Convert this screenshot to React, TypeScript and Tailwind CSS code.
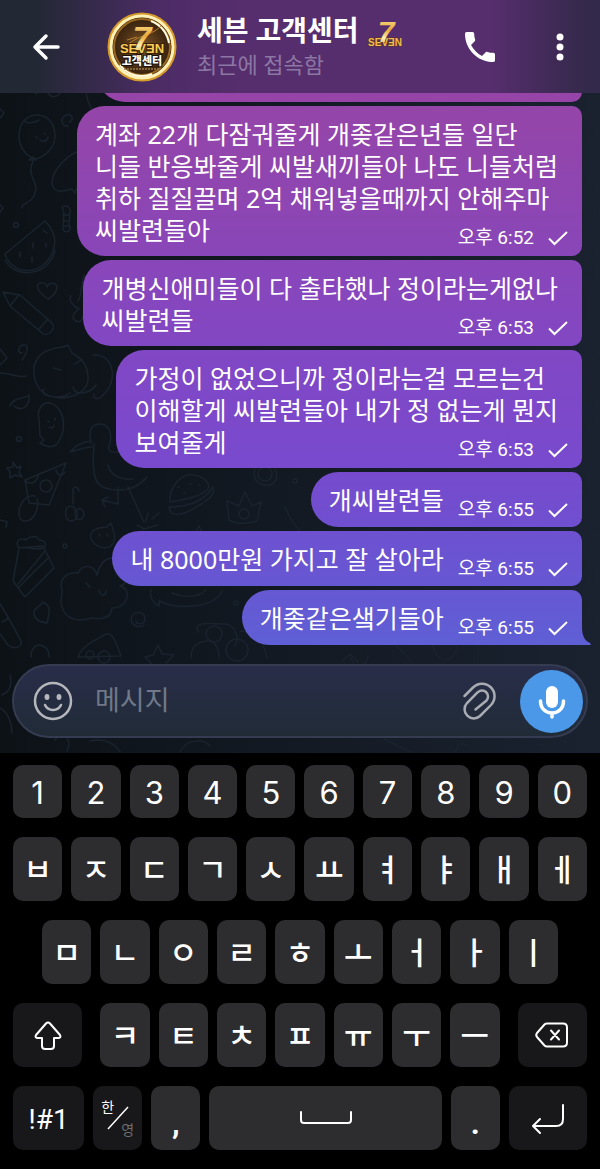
import type { ReactNode } from 'react'

interface Mensaje {
  lines: string[]
  time: string
  tone: string
}

const messages: Mensaje[] = [
  {
    lines: [
      '계좌 22개 다잠궈줄게 개좆같은년들 일단',
      '니들 반응봐줄게 씨발새끼들아 나도 니들처럼',
      '취하 질질끌며 2억 채워넣을때까지 안해주마',
      '씨발련들아',
    ],
    time: '오후 6:52',
    tone: 'from-[#9545a8] to-[#8946b8]',
  },
  {
    lines: ['개병신애미들이 다 출타했나 정이라는게없나', '씨발련들'],
    time: '오후 6:53',
    tone: 'from-[#8946b9] to-[#8247c3]',
  },
  {
    lines: ['가정이 없었으니까 정이라는걸 모르는건', '이해할게 씨발련들아 내가 정 없는게 뭔지', '보여줄게'],
    time: '오후 6:53',
    tone: 'from-[#8147c4] to-[#784ace]',
  },
  { lines: ['개씨발련들'], time: '오후 6:55', tone: 'from-[#774acd] to-[#6f50d0]' },
  { lines: ['내 8000만원 가지고 잘 살아라'], time: '오후 6:55', tone: 'from-[#6e51d0] to-[#6657d2]' },
  { lines: ['개좆같은샠기들아'], time: '오후 6:55', tone: 'from-[#6658d2] to-[#5f5fd5]' },
]

function Doodles() {
  return (
    <svg
      className="absolute inset-0 h-full w-full"
      viewBox="0 0 600 753"
      preserveAspectRatio="xMidYMin slice"
      fill="none"
      stroke="#1a232d"
      strokeWidth="1.5"
      strokeLinecap="round"
      strokeLinejoin="round"
      aria-hidden="true"
    >
      {/* balloon */}
      <path d="M37 115c-12 0-18 10-18 21s7 20 16 23c10-2 20-11 20-23s-7-21-18-21zM29 160l7 0-3-3zM33 161c-8 16 8 20 1 35-4 8-14 8-12 12M24 121c5 4 10 2 15-1M36 137l1 1M44 133l1 1M40 140c3 3 8 0 8-3" />
      <path d="M68 126c-7 1-8-8-2-11s9 6 3 7M36 94c4-5 9-6 12-1s9 5 13-1M86 93c2 12 7 20 14 24" />
      {/* whale */}
      <path d="M79 151c-18 7-30 26-26 36 4 8 16 2 19 2l3 4 3-8M0 109l4 4-4 5M0 205l3 3-3 4" />
      {/* watermelon */}
      <path d="M45 221L5 254c7 23 42 23 49-7 3-10-3-20-9-26zM5 260c10 20 45 16 50-10M33 243v5M46 243v4M20 252v5M32 257v5M43 230l4 3" />
      <path d="M62 207c5-3 8 0 8 4l-1 14c3 5-2 9-6 5l1-17-2-6zM63 215h6M63 221h6M63 226h6" />
      <circle cx="16" cy="225" r="2.5" />
      {/* pencil and heart */}
      <path d="M3 292l7 14 32 27c6 5 15-5 10-10L20 295zM10 306l8-10M38 330l10-11M48 299c-9-6-14-14-8-16 4-2 7 2 7 4 2-5 9-5 10 0 0 5-4 9-9 12zM84 275c-3 10-2 20-6 26M71 296c-4 6 6 12 8 13-6 4-8 9-3 12s8-4 8-10" />
      <path d="M22 353c-5 0-4-8 2-8s3 8-2 15M0 349l7 9-7 7" />
      {/* cat */}
      <path d="M34 366c3-9 7-14 15-16 7-3 14-2 19-5l4 8c10 5 16 14 16 25 0 12-10 18-25 20-18 0-27-9-29-23zM44 389c-7 8 18 11 26 4M73 387c2 10 18 6 23-2M93 355c20-2 26 25 11 39-5 6-11 6-10 0M53 368l8 2M75 364l6-4M0 373c9-1 17 6 26 3" />
      <path d="M10 406c3-9 15-7 19-11 1 14-9 16-15 11M39 420c-4-15 10-23 19-12 8 11 7 25-1 36-5 5-12 2-17-1l4-3-4-4zM48 421l1 1M55 418v2M49 427c3 2 5 0 5-2" />
      <circle cx="19" cy="439" r="2.5" />
      {/* bird */}
      <path d="M91 443c-3-13 1-19 9-19 10 0 13 12 9 22-3 8 10 7 20 4M91 441c-9 1-16 5-21 11 8-2 15-5 22-5M94 444c-3 38 2 44 22 46 15 1 25-6 31-13M108 465c2 10 12 15 25 14M118 487v17l-16-4M128 487l16 35M102 500l3 7M102 500l6-3M137 525l7 4 14-4M146 521l2-8M152 519l7-6" />
      <path d="M13 462l4 6 4-2-2 6 3 5-7-2-5 3 0-6-3-4 6-1zM25 480l41-17-17 42-20-2zM25 480c6 7 12 1 13-4M56 470c3 9 8 4 9 2" />
      <circle cx="46" cy="486" r="6" />
      <path d="M35 496c-15-3-21 23-11 25 11 1 15-14 13-22" />
      <path d="M74 493c-4-4 3-10 5-2M73 504v-13M73 507c-10-5-9 15-2 14 8-1 8-9 2-14zM84 514c0 6-8 8-9 1s8-9 9-1M0 520l7 2-1 5" />
      {/* burger and crown */}
      <path d="M170 502c-1-17 13-29 23-27 11 1 18 9 15 14-9 9-28 11-38 13zM169 507c16 0 34-4 44-20 3 6-4 12-10 16-13 8-22 14-32 10zM178 487h1M190 484h1M184 493h1M199 485h1" />
      <path d="M227 501l2 19c9 5 18 4 28 1l4-19-9 4-7-14-6 14zM255 469c-4 12 7 18 15 16 7-2 8-10 5-16M285 507c5 12 10 19 15 24M196 532l3-6 3 6" />
      <circle cx="244" cy="514" r="5" />
      <circle cx="265" cy="474" r="7" />
      <circle cx="295" cy="481" r="2" />
      {/* cake and strawberry */}
      <path d="M19 548l-6 33 12 16 29-29-11-22zM19 548c-5-7 2-11 7-8 3-4 11-5 13 0 6 0 9 6 4 8-8 3-16-2-24 0M18 584l27-33M19 587l30-30M91 539c-3-9 8-12 16-12l4-4 3 10c4 18-16 19-23 6zM99 534l1 2M107 534l1 2" />
      <circle cx="65" cy="546" r="2" />
      {/* tree */}
      <path d="M62 590c-4-13 7-18 16-17 5-10 16-8 19 2 4-19 19-22 28-9 5 10 3 18-5 20 12 3 9 22-8 22 0 10-12 12-20 10-20 6-30-3-31-16zM86 583l4 4M99 590c1 7 7 6 7 1M34 613c0-6 7-7 9-11 8 4 7 10 4 21-8-1-13-4-13-10" />
      <path d="M144 625c-5 4-13 0-13-6 1-8 14-9 14 0 0 5-8 7-9 2M151 590c-2 7 2 13 8 16l0-5c21 10 56 6 63-10M172 593c12 5 26 5 34-3" />
      <path d="M0 604c9 14 13 22 20 35 5 8-6 11-12 6L0 634M2 622l7-4M31 657c0-18 19-14 18 0M78 657c4-12 20-18 28-23 7-2 10 9 15 22z" />
      <circle cx="90" cy="655" r="4" />
      <circle cx="104" cy="657" r="6" />
      <path d="M158 645l4 9 12 1-8 8 1 11-9-5-9 4 2-10-6-6 8-2zM198 632c-5-12 14-8 27-8 8 0 16 12 10 22M191 658c0-18 13-15 18-18 6 2 11 10 10 18M240 631c18 1 24 11 27 27" />
      <circle cx="214" cy="634" r="8" />
      <circle cx="237" cy="650" r="11" />
      <circle cx="236" cy="603" r="2" />
      <path d="M10 675c3 13-3 18-8 20M0 708c8 4 12 15 12 25M55 740c8-12 18 0 12 11M90 741c14-3 25 2 30 11M180 752c6-13 23-14 30-6M350 657c4 10 15 14 18-1M342 661l8-7 8 8M396 645c4 6 12 10 16 18M432 641c3 25 24 25 26 1M478 644v17M384 739l27 13M455 752l5-9 8 3" />
      {/* right edge */}
      <path d="M580 110c4-9 12-13 20-13M579 138c10 0 14-11 21-14M582 184c2-8 8-9 12-10 3 10-2 15-8 14M588 192c6-5 10 0 8 9M582 216c10 4 17-4 18-12M583 254c8-7 13 0 9 6 7 6 2 17-7 13M582 306c5-8 7 5 1 10M582 346c8 1 13 7 18 14M583 400c14-3 17 18 7 24-4 3-7 1-8 0M585 403l8-3 2 8M583 472l5 6-4 5 4 12M600 518l-8 3 2 10 6-4M582 560c10 13 11 18 18 33M585 578c6 12 3 25-2 30M580 608l20 25M560 690c12 4 20-4 23-12M540 745c16-6 18 0 25-4" />
    </svg>
  )
}

function CheckMark() {
  return (
    <svg className="h-[15px] w-5" viewBox="0 0 20 15" fill="none" stroke="white" strokeWidth="2" aria-hidden="true">
      <path d="M1 7.500l5.500 5.500L19 1" />
    </svg>
  )
}

function Bubble({ message, last }: { message: Mensaje; last: boolean }) {
  const single = message.lines.length === 1
  const head = message.lines.slice(0, -1)
  const tail = message.lines[message.lines.length - 1]

  return (
    <article
      className={`relative rounded-l-[28px] rounded-tr-[10px] bg-linear-to-b pt-3 pr-[14px] pl-[18px] ${message.tone} ${
        last ? '' : 'rounded-br-[10px]'
      } ${single ? 'pb-[11px]' : 'pb-[10px]'}`}
    >
      {head.map((line) => (
        <p key={line} className="pr-2.5">
          {line}
        </p>
      ))}
      <div className="flex items-end justify-between gap-[14px]">
        <p>{tail}</p>
        <div className={`flex items-center gap-[14px] font-['Roboto','Noto_Sans_CJK_KR',sans-serif] ${single ? '-mb-1.5' : '-mb-1'}`}>
          <time className="text-[19px] leading-6">{message.time}</time>
          <CheckMark />
        </div>
      </div>
      {last && (
        <svg className="absolute bottom-0 left-full h-[18px] w-[9px]" viewBox="0 0 9 18" fill="#5f5fd5" aria-hidden="true">
          <path d="M0 0c0 9 3 14 8 16 1 .5 1 2 0 2H0z" />
        </svg>
      )}
    </article>
  )
}

function GoldFill({ id }: { id: string }) {
  return (
    <defs>
      <linearGradient id={id} x1="0" y1="0" x2="0" y2="1">
        <stop offset="0" stopColor="#ffe9a0" />
        <stop offset="0.45" stopColor="#e9a93a" />
        <stop offset="0.7" stopColor="#fff0b0" />
        <stop offset="1" stopColor="#c98a25" />
      </linearGradient>
    </defs>
  )
}

function Avatar() {
  return (
    <svg className="size-[70px] shrink-0" viewBox="0 0 70 70" aria-hidden="true">
      <GoldFill id="avatar-gold" />
      <defs>
        <radialGradient id="coin">
          <stop offset="0" stopColor="#7d5628" />
          <stop offset="0.6" stopColor="#4a2f14" />
          <stop offset="1" stopColor="#2a1909" />
        </radialGradient>
      </defs>
      <circle cx="35" cy="35" r="34" fill="url(#coin)" />
      <circle cx="35" cy="35" r="33" fill="none" stroke="#d59a2e" strokeWidth="3" />
      <circle cx="35" cy="35" r="31" fill="none" stroke="#fff0b5" strokeWidth="3" />
      <circle cx="35" cy="35" r="28" fill="none" stroke="#9a6720" strokeWidth="2" />
      <path d="M44 9c10 4 16 12 18 22M13 53c8 11 22 13 32 9" fill="none" stroke="#fffbe0" strokeWidth="2" />
      <path d="M16 38c12-16 26-12 38-24M20 28l10-3" fill="none" stroke="#b9822f" strokeWidth="1" />
      <g textAnchor="middle" fontFamily="'Liberation Sans', sans-serif" fontWeight="700">
        <text x="35" y="41" fontSize="13" fill="#f8ce58" stroke="#3a2108" strokeWidth="2" paintOrder="stroke">
          SEVƎN
        </text>
        <text x="35" y="38" fontSize="34" fontStyle="italic" fill="url(#avatar-gold)">
          7
        </text>
        <text
          x="35"
          y="53"
          fontSize="11"
          fontFamily="'Noto Sans CJK KR', sans-serif"
          fontWeight="900"
          fill="#fff"
          stroke="#1d1208"
          strokeWidth="2"
          paintOrder="stroke"
        >
          고객센터
        </text>
      </g>
      <path d="M17 57h36" stroke="#9b7a48" strokeWidth="1.500" strokeDasharray="2 1" />
    </svg>
  )
}

function SevenBadge() {
  return (
    <svg className="size-9" viewBox="0 0 36 36" aria-hidden="true">
      <GoldFill id="badge-gold" />
      <g textAnchor="middle" fontFamily="'Liberation Sans', sans-serif" fontWeight="700">
        <text x="18" y="32" fontSize="10" fill="#f0bc50" stroke="#5a3514" strokeWidth="1" paintOrder="stroke">
          SEVƎN
        </text>
        <text x="19" y="28" fontSize="30" fontStyle="italic" fill="url(#badge-gold)">
          7
        </text>
      </g>
    </svg>
  )
}

function Header() {
  return (
    <header className="relative flex h-[93px] items-center bg-[linear-gradient(90deg,#222834_6%,#4c2c65_26%,#562d6d_40%,#562d6d_82%,#33294a_98%)] pr-9 pl-[31px]">
      <button aria-label="뒤로" className="size-8">
        <svg className="size-8" viewBox="0 0 32 32" fill="none" stroke="white" strokeWidth="3.500" strokeLinecap="round" strokeLinejoin="round">
          <path d="M27 16H4M15 5L4 16l11 11" />
        </svg>
      </button>
      <div className="ml-11">
        <Avatar />
      </div>
      <div className="ml-5 flex-1 pt-0.5">
        <div className="flex items-center gap-2">
          <h1 className="text-[28px] leading-9 font-bold whitespace-nowrap">세븐 고객센터</h1>
          <SevenBadge />
        </div>
        <p className="text-[22px] leading-8 text-[#8c77a3]">최근에 접속함</p>
      </div>
      <button aria-label="전화" className="size-10">
        <svg className="size-10" viewBox="0 0 24 24" fill="white">
          <path d="M6.620 10.790c1.440 2.830 3.760 5.140 6.590 6.590l2.200-2.200c.270-.270.670-.360 1.020-.240 1.120.370 2.330.570 3.570.570.550 0 1 .450 1 1V20c0 .550-.450 1-1 1-9.390 0-17-7.610-17-17 0-.550.450-1 1-1h3.500c.550 0 1 .450 1 1 0 1.250.200 2.450.570 3.570.110.350.030.740-.250 1.020l-2.200 2.200z" />
        </svg>
      </button>
      <button aria-label="더보기" className="ml-[56px] h-8 w-2">
        <svg className="h-8 w-2" viewBox="0 0 8 32" fill="white">
          <circle cx="4" cy="6" r="3.500" />
          <circle cx="4" cy="16" r="3.500" />
          <circle cx="4" cy="26" r="3.500" />
        </svg>
      </button>
    </header>
  )
}

function Composer() {
  return (
    <div className="relative px-3 pt-[19px] pb-[15px]">
      <form className="flex h-[74px] items-center rounded-full border-2 border-[#353b50] bg-linear-to-b from-[#292d49] to-[#202b37] pr-[3px] pl-[19px]">
        <button type="button" aria-label="이모티콘" className="size-10">
          <svg className="size-10" viewBox="0 0 40 40" fill="none" stroke="#b5b7bc" strokeWidth="2.500" strokeLinecap="round">
            <circle cx="20" cy="20" r="18" />
            <path d="M12 24c3 6.500 13 6.500 16 0" />
            <ellipse cx="14" cy="16" rx="1.200" ry="1.800" fill="#b5b7bc" />
            <ellipse cx="26" cy="16" rx="1.200" ry="1.800" fill="#b5b7bc" />
          </svg>
        </button>
        <input
          type="text"
          aria-label="메시지"
          placeholder="메시지"
          className="ml-[22px] h-12 min-w-0 flex-1 bg-transparent text-[27px] outline-none placeholder:text-[#6f7988]"
        />
        <button type="button" aria-label="첨부" className="mr-5 size-10">
          <svg className="size-10" viewBox="0 0 40 40" fill="none" stroke="#a9abb3" strokeWidth="2.500" strokeLinecap="round">
            <path d="M4.500 15L13 6.500A12.500 12.500 0 0 1 31 24L20 35A9.200 9.200 0 0 1 7 22L17.500 11.500A6 6 0 0 1 26.500 19.500L15.500 28.500" />
          </svg>
        </button>
        <button type="button" aria-label="음성 메시지" className="flex size-[63px] items-center justify-center rounded-full bg-[#4b98e8]">
          <svg className="h-9 w-8" viewBox="0 0 32 36" fill="none" stroke="white" strokeWidth="3.500" strokeLinecap="round">
            <rect x="10" y="3" width="12" height="22" rx="6" fill="white" stroke="none" />
            <path d="M4.500 18c0 16 23 16 23 0M16 30v4" />
          </svg>
        </button>
      </form>
    </div>
  )
}

interface KeyProps {
  children: ReactNode
  label?: string
  className?: string
}

function Key({ children, label, className = 'h-16 bg-[#2d2d2f] pt-1 text-[31px] font-medium' }: KeyProps) {
  return (
    <button aria-label={label} className={`flex min-w-0 items-center justify-center rounded-[10px] ${className}`}>
      {children}
    </button>
  )
}

const digits = ['1', '2', '3', '4', '5', '6', '7', '8', '9', '0']
const topRow = ['ㅂ', 'ㅈ', 'ㄷ', 'ㄱ', 'ㅅ', 'ㅛ', 'ㅕ', 'ㅑ', 'ㅐ', 'ㅔ']
const midRow = ['ㅁ', 'ㄴ', 'ㅇ', 'ㄹ', 'ㅎ', 'ㅗ', 'ㅓ', 'ㅏ', 'ㅣ']
const lowRow = ['ㅋ', 'ㅌ', 'ㅊ', 'ㅍ', 'ㅠ', 'ㅜ', 'ㅡ']

function Keyboard() {
  return (
    <section aria-label="키보드" className="flex flex-col gap-[19px] bg-black px-[13px] pt-3 pb-[19px]">
      <div className="grid grid-cols-10 gap-[9px]">
        {digits.map((k) => (
          <Key key={k} className="h-[53px] bg-[#2d2d2f] pt-1 font-['Inter'] text-[31px]">
            {k}
          </Key>
        ))}
      </div>
      <div className="grid grid-cols-10 gap-[9px]">
        {topRow.map((k) => (
          <Key key={k}>{k}</Key>
        ))}
      </div>
      <div className="grid grid-cols-9 gap-[9px] px-[29px]">
        {midRow.map((k) => (
          <Key key={k}>{k}</Key>
        ))}
      </div>
      <div className="grid grid-cols-[78fr_repeat(7,49fr)_78fr] gap-[9px]">
        <Key label="쉬프트" className="mr-[9px] h-16 bg-[#18181a]">
          <svg className="size-8" viewBox="0 0 32 32" fill="none" stroke="white" strokeWidth="2" strokeLinejoin="round">
            <path d="M14 4.500Q16 2.500 18 4.500L28 16Q29.500 19 26 19H22V27Q22 30 19 30H13Q10 30 10 27V19H6Q2.500 19 4 16z" />
          </svg>
        </Key>
        {lowRow.map((k) => (
          <Key key={k}>{k}</Key>
        ))}
        <Key label="지우기" className="ml-[9px] h-16 bg-[#18181a]">
          <svg className="h-7 w-9" viewBox="0 0 36 28" fill="none" stroke="white" strokeWidth="2" strokeLinecap="round" strokeLinejoin="round">
            <path d="M13 2.500H29Q33 2.500 33 6.500V21.500Q33 25.500 29 25.500H13Q11.500 25.500 10.500 24.500L3 16Q1.500 14 3 12L10.500 3.500Q11.500 2.500 13 2.500zM17 9.500l8 9M25 9.500l-8 9" />
          </svg>
        </Key>
      </div>
      <div className="grid grid-cols-[71fr_49fr_49fr_232fr_49fr_78fr] gap-[9px]">
        <Key className="h-16 bg-[#18181a] pt-1 text-[28px]">!#1</Key>
        <Key label="한영 전환" className="relative h-16 bg-[#18181a] text-[14px] leading-4">
          <span className="absolute top-[13px] left-2">한</span>
          <svg className="size-6" viewBox="0 0 24 24" stroke="white" strokeWidth="1.500" aria-hidden="true">
            <path d="M2 23L22 1" />
          </svg>
          <span className="absolute right-2 bottom-3 text-[#6e6e70]">영</span>
        </Key>
        <Key className="h-16 bg-[#2d2d2f] pt-3 text-[31px] font-bold">,</Key>
        <Key label="스페이스" className="h-16 bg-[#2d2d2f]">
          <svg className="h-4 w-[52px]" viewBox="0 0 52 16" fill="none" stroke="white" strokeWidth="2" strokeLinecap="round">
            <path d="M1 2v8q0 3 3 3h44q3 0 3-3V2" />
          </svg>
        </Key>
        <Key className="h-16 bg-[#2d2d2f] pt-3 text-[31px] font-bold">.</Key>
        <Key label="엔터" className="h-16 bg-[#18181a]">
          <svg className="h-8 w-9" viewBox="0 0 36 32" fill="none" stroke="white" strokeWidth="2" strokeLinecap="round" strokeLinejoin="round">
            <path d="M33 3V17Q33 24 26 24H3M10 17l-7 7 7 7" />
          </svg>
        </Key>
      </div>
    </section>
  )
}

export default function App() {
  return (
    <div className="min-h-screen bg-black font-['Roboto','Noto_Sans_CJK_KR',sans-serif] text-white">
      <div className="relative bg-linear-to-r from-[#0d1217] via-[#121922] via-45% to-[#1a2230]">
        <Doodles />
        <Header />
        <main className="relative flex flex-col items-end gap-1 pr-[18px] font-['Noto_Sans','Noto_Sans_CJK_KR',sans-serif] text-[25px] leading-8 whitespace-nowrap">
          <div className="flex h-[9px] w-full items-end justify-end overflow-hidden">
            <div className="ml-[97px] h-14 flex-1 shrink-0 rounded-l-[28px] rounded-r-[10px] bg-[#9744a8]" />
          </div>
          {messages.map((message, i) => (
            <Bubble key={message.lines[0]} message={message} last={i === messages.length - 1} />
          ))}
        </main>
        <Composer />
      </div>
      <Keyboard />
    </div>
  )
}
